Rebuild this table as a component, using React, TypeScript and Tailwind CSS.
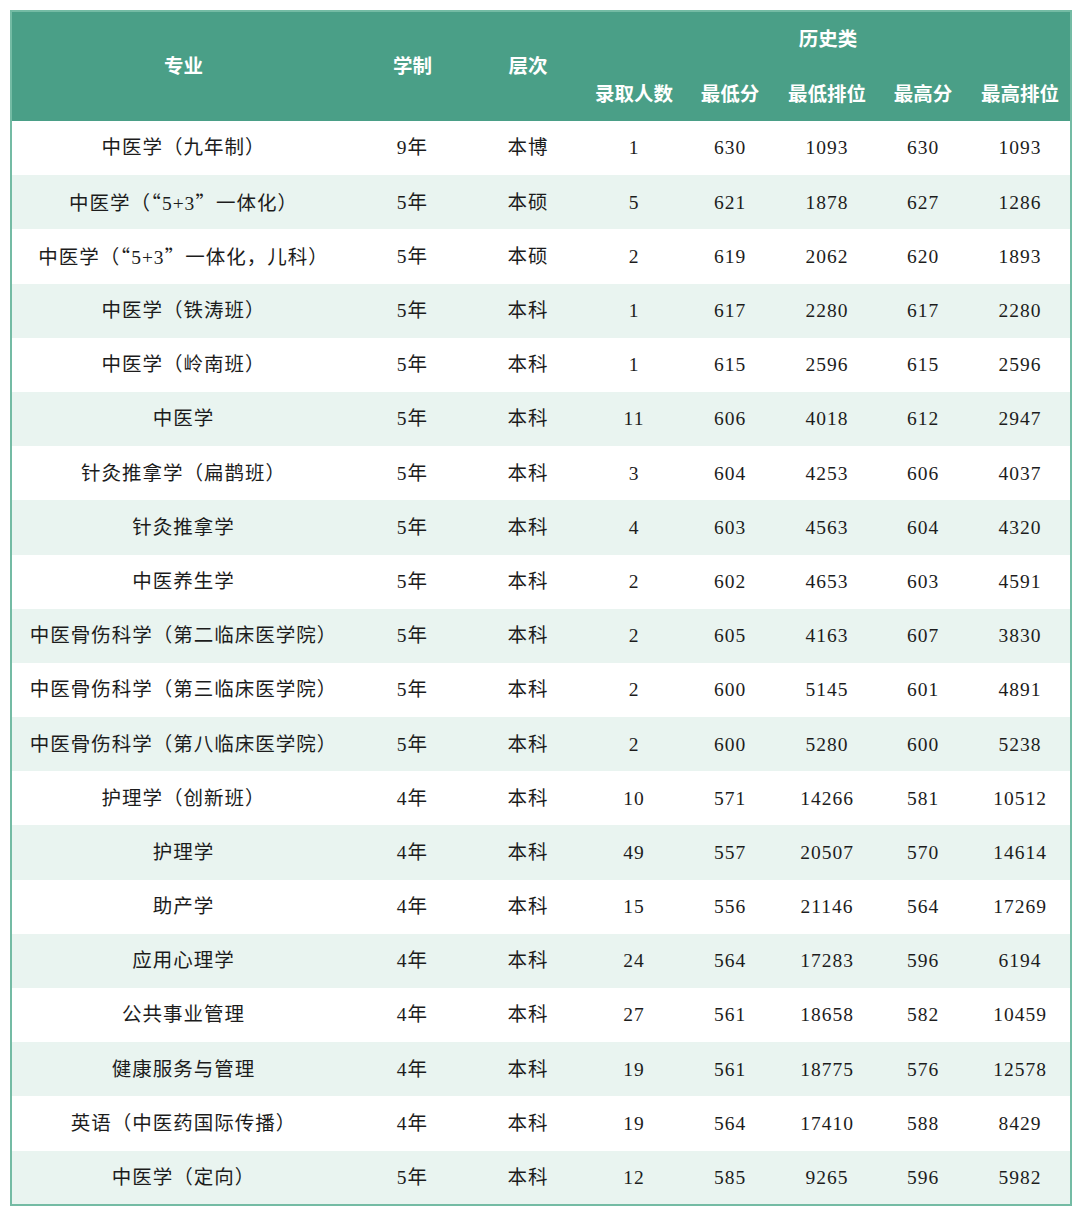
const rows: string[][] = [
  ['中医学（九年制）', '9年', '本博', '1', '630', '1093', '630', '1093'],
  ['中医学（“5+3”一体化）', '5年', '本硕', '5', '621', '1878', '627', '1286'],
  ['中医学（“5+3”一体化，儿科）', '5年', '本硕', '2', '619', '2062', '620', '1893'],
  ['中医学（铁涛班）', '5年', '本科', '1', '617', '2280', '617', '2280'],
  ['中医学（岭南班）', '5年', '本科', '1', '615', '2596', '615', '2596'],
  ['中医学', '5年', '本科', '11', '606', '4018', '612', '2947'],
  ['针灸推拿学（扁鹊班）', '5年', '本科', '3', '604', '4253', '606', '4037'],
  ['针灸推拿学', '5年', '本科', '4', '603', '4563', '604', '4320'],
  ['中医养生学', '5年', '本科', '2', '602', '4653', '603', '4591'],
  ['中医骨伤科学（第二临床医学院）', '5年', '本科', '2', '605', '4163', '607', '3830'],
  ['中医骨伤科学（第三临床医学院）', '5年', '本科', '2', '600', '5145', '601', '4891'],
  ['中医骨伤科学（第八临床医学院）', '5年', '本科', '2', '600', '5280', '600', '5238'],
  ['护理学（创新班）', '4年', '本科', '10', '571', '14266', '581', '10512'],
  ['护理学', '4年', '本科', '49', '557', '20507', '570', '14614'],
  ['助产学', '4年', '本科', '15', '556', '21146', '564', '17269'],
  ['应用心理学', '4年', '本科', '24', '564', '17283', '596', '6194'],
  ['公共事业管理', '4年', '本科', '27', '561', '18658', '582', '10459'],
  ['健康服务与管理', '4年', '本科', '19', '561', '18775', '576', '12578'],
  ['英语（中医药国际传播）', '4年', '本科', '19', '564', '17410', '588', '8429'],
  ['中医学（定向）', '5年', '本科', '12', '585', '9265', '596', '5982'],
]

const subHeads = ['录取人数', '最低分', '最低排位', '最高分', '最高排位']

// curly quotes set in the CJK face so they take a full-width slot
function Cell({ text }: { text: string }) {
  const parts = text.split(/([“”])/)
  return (
    <>
      {parts.map((p, k) =>
        p === '“' || p === '”' ? (
          <span key={k} className="font-['Noto_Sans_CJK_SC',serif]">
            {p}
          </span>
        ) : (
          p
        ),
      )}
    </>
  )
}

export default function App() {
  return (
    <div className="min-h-[1216px] bg-white pl-[10px] pt-[10px]">
      <table className="w-[1060px] table-fixed border-collapse border-2 border-[#74bba4]">
        <colgroup>
          <col className="w-[344px]" />
          <col className="w-[115px]" />
          <col className="w-[116px]" />
          <col className="w-[96px]" />
          <col className="w-[96px]" />
          <col className="w-[98px]" />
          <col className="w-[94px]" />
          <col className="w-[101px]" />
        </colgroup>
        <thead className="bg-[#4a9f87] font-['Noto_Sans_CJK_SC',sans-serif] text-[19.5px] font-bold text-white">
          <tr className="h-[55px]">
            <th rowSpan={2} className="pb-[4px] font-bold">专业</th>
            <th rowSpan={2} className="pb-[4px] font-bold">学制</th>
            <th rowSpan={2} className="pb-[4px] font-bold">层次</th>
            <th colSpan={5} className="pb-[2px] font-bold">历史类</th>
          </tr>
          <tr className="h-[55px]">
            {subHeads.map((h) => (
              <th key={h} className="whitespace-nowrap pb-[2px] font-bold">
                {h}
              </th>
            ))}
          </tr>
        </thead>
        <tbody className="font-['Liberation_Serif','Noto_Sans_CJK_SC',serif] text-[19.5px] tracking-[1px] text-[#1c1c1c]">
          {rows.map((r, i) => (
            <tr key={i} className={`h-[54.2px] ${i % 2 === 1 ? 'bg-[#e9f4f0]' : 'bg-white'}`}>
              {r.map((c, j) => (
                <td key={j} className="whitespace-nowrap p-0 text-center">
                  <Cell text={c} />
                </td>
              ))}
            </tr>
          ))}
        </tbody>
      </table>
    </div>
  )
}
